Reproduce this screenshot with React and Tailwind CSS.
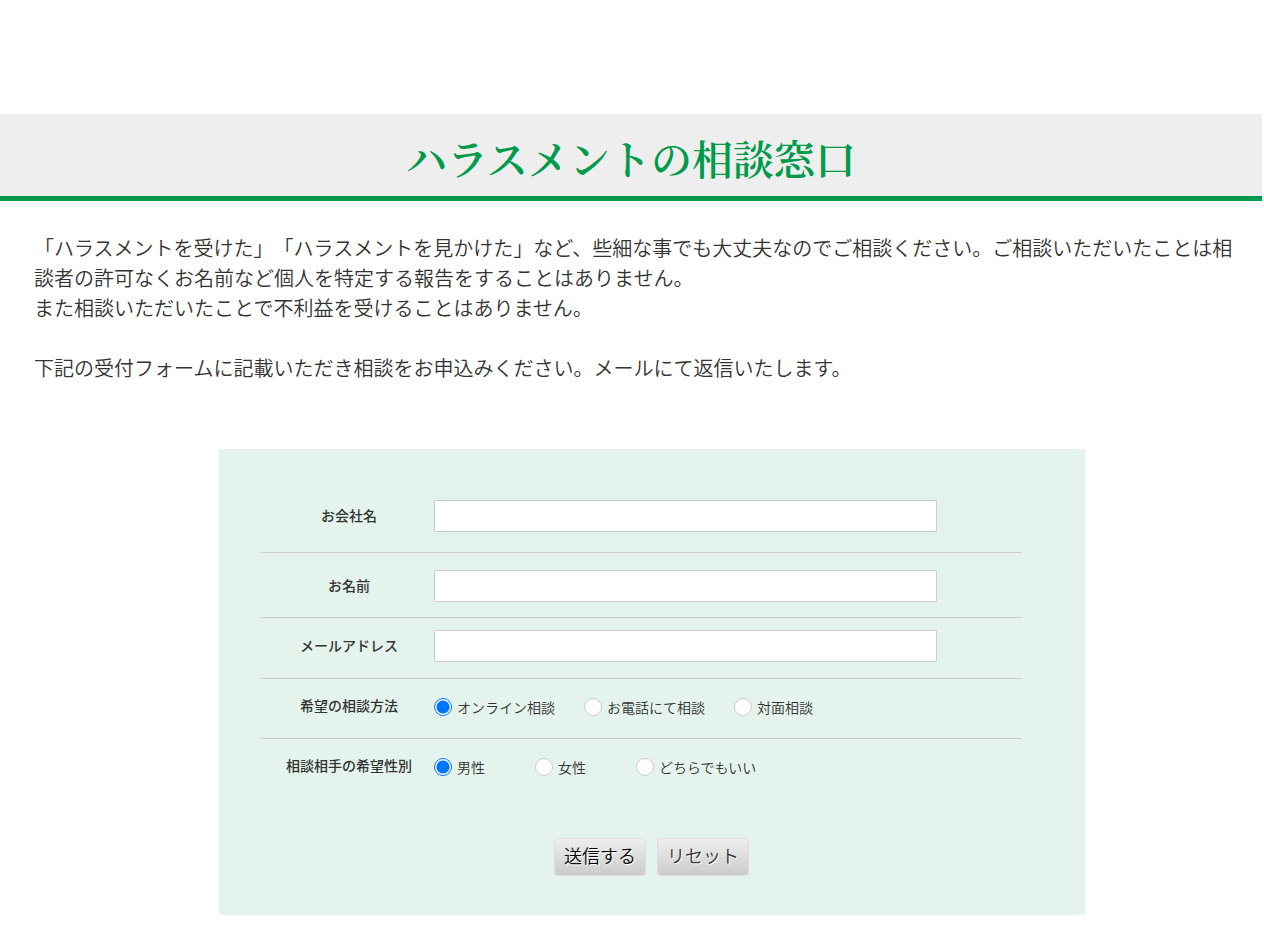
import React, { useState } from 'react';

const textFields = [
  { id: 'company', label: 'お会社名', type: 'text', thPadding: 'pb-[2px]', padding: 'pt-5 pb-5' },
  { id: 'name', label: 'お名前', type: 'text', thPadding: 'pb-0', padding: 'pt-[17px] pb-[15px]' },
  { id: 'email', label: 'メールアドレス', type: 'email', thPadding: 'pb-[6px]', padding: 'pt-3 pb-4' },
];

const methods = ['オンライン相談', 'お電話にて相談', '対面相談'];
const genders = ['男性', '女性', 'どちらでもいい'];

const thClass = 'w-[173px] pl-[3px] text-center font-medium';
const buttonClass =
  'h-[38px] rounded border border-[#ddd] bg-linear-to-b from-[#eee] to-[#ccc] px-[9px] pb-1 text-lg leading-7 font-[350] [text-shadow:1px_1px_0_#fff] hover:to-[#ddd]';

const RadioGroup = ({ name, labelledBy, options, value, onChange, gap }) => (
  <div role="radiogroup" aria-labelledby={labelledBy} className={`flex flex-wrap items-center ${gap}`}>
    {options.map((option) => (
      <label key={option} className="flex items-center gap-[5px]">
        <input
          type="radio"
          name={name}
          value={option}
          checked={value === option}
          onChange={() => onChange(option)}
          className="size-[18px] shrink-0 appearance-none rounded-full border border-[#ccc] bg-white checked:border-[#0075ff] checked:bg-[radial-gradient(circle,#0075ff_6px,#fff_7px)]"
        />
        <span className="font-[350]">{option}</span>
      </label>
    ))}
  </div>
);

const App = () => {
  const [values, setValues] = useState({ company: '', name: '', email: '' });
  const [method, setMethod] = useState(methods[0]);
  const [gender, setGender] = useState(genders[0]);

  const handleChange = (e) => {
    setValues((prev) => ({ ...prev, [e.target.name]: e.target.value }));
  };

  const handleReset = () => {
    setValues({ company: '', name: '', email: '' });
    setMethod(methods[0]);
    setGender(genders[0]);
  };

  return (
    <div
      lang="ja"
      className="bg-white pt-[114px] pb-5 font-['Noto_Sans_CJK_JP',sans-serif] text-[#333] [text-spacing-trim:space-all]"
    >
      <header className="mr-[2px] border-b-[5px] border-[#009a4b] bg-[#eee] pt-[14px] pb-2">
        <h1 className="text-center font-['Noto_Serif_CJK_JP','Noto_Sans_CJK_JP',serif] text-[41px] leading-[60px] font-semibold text-[#009a4b]">
          ハラスメントの相談窓口
        </h1>
      </header>

      <main>
        <div className="pt-8 pr-[30px] pl-[34px] text-xl leading-[30px] font-[350]">
          <p>
            「ハラスメントを受けた」「ハラスメントを見かけた」など、些細な事でも大丈夫なのでご相談ください。ご相談いただいたことは相談者の許可なくお名前など個人を特定する報告をすることはありません。
            <br />
            また相談いただいたことで不利益を受けることはありません。
          </p>
          <p className="mt-[30px]">
            下記の受付フォームに記載いただき相談をお申込みください。メールにて返信いたします。
          </p>
        </div>

        <div className="mt-[66px] pl-10">
          <form
            onSubmit={(e) => e.preventDefault()}
            onReset={handleReset}
            className="mx-auto max-w-[866px] bg-[#e4f3ec] pt-[31px] pr-[63px] pb-[39px] pl-[42px] text-sm"
          >
            <table className="w-full">
              <tbody>
                {textFields.map((field) => (
                  <tr key={field.id} className="border-b border-[#ccc]">
                    <th scope="row" className={`${thClass} ${field.thPadding}`}>
                      <label htmlFor={field.id}>{field.label}</label>
                    </th>
                    <td className={field.padding}>
                      <input
                        id={field.id}
                        name={field.id}
                        type={field.type}
                        value={values[field.id]}
                        onChange={handleChange}
                        className="block h-8 w-full max-w-[503px] rounded-[1px] border border-[#ccc] bg-white px-2"
                      />
                    </td>
                  </tr>
                ))}
                <tr className="border-b border-[#ccc]">
                  <th scope="row" id="method-label" className={`${thClass} pb-[7px]`}>
                    希望の相談方法
                  </th>
                  <td className="pt-[18px] pb-[21px]">
                    <RadioGroup
                      name="method"
                      labelledBy="method-label"
                      options={methods}
                      value={method}
                      onChange={setMethod}
                      gap="gap-[29px]"
                    />
                  </td>
                </tr>
                <tr>
                  <th scope="row" id="gender-label" className={`${thClass} pb-[7px]`}>
                    相談相手の希望性別
                  </th>
                  <td className="pt-[18px] pb-[21px]">
                    <RadioGroup
                      name="gender"
                      labelledBy="gender-label"
                      options={genders}
                      value={gender}
                      onChange={setGender}
                      gap="gap-[50px]"
                    />
                  </td>
                </tr>
              </tbody>
            </table>

            <div className="mt-10 flex justify-center gap-[11px] pl-5">
              <button type="submit" className={`${buttonClass} text-black`}>
                送信する
              </button>
              <button type="reset" className={`${buttonClass} text-[#333]`}>
                リセット
              </button>
            </div>
          </form>
        </div>
      </main>
    </div>
  );
};

export default App;
